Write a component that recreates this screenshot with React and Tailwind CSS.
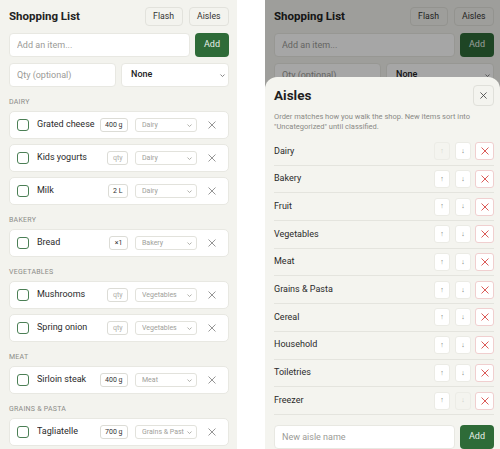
const sections = [
  { name: 'Dairy', items: [
    { name: 'Grated cheese', qty: '400 g', aisle: 'Dairy' },
    { name: 'Kids yogurts', qty: '', aisle: 'Dairy' },
    { name: 'Milk', qty: '2 L', aisle: 'Dairy' },
  ] },
  { name: 'Bakery', items: [{ name: 'Bread', qty: '×1', aisle: 'Bakery' }] },
  { name: 'Vegetables', items: [
    { name: 'Mushrooms', qty: '', aisle: 'Vegetables' },
    { name: 'Spring onion', qty: '', aisle: 'Vegetables' },
  ] },
  { name: 'Meat', items: [{ name: 'Sirloin steak', qty: '400 g', aisle: 'Meat' }] },
  { name: 'Grains & Pasta', items: [{ name: 'Tagliatelle', qty: '700 g', aisle: 'Grains & Pasta' }] },
]

const aisles = ['Dairy', 'Bakery', 'Fruit', 'Vegetables', 'Meat', 'Grains & Pasta', 'Cereal', 'Household', 'Toiletries', 'Freezer']

function Chevron({ className }) {
  return (
    <svg className={className} viewBox="0 0 10 10" fill="none" stroke="currentColor" strokeWidth="1.3">
      <path d="M2.5 4l2.5 2.5L7.5 4" strokeLinecap="round" strokeLinejoin="round" />
    </svg>
  )
}

function Cross({ className, width = 1.2 }) {
  return (
    <svg className={className} viewBox="0 0 10 10" fill="none" stroke="currentColor" strokeWidth={width}>
      <path d="M1 1l8 8M9 1L1 9" strokeLinecap="round" />
    </svg>
  )
}

function ItemCard({ item }) {
  return (
    <div className="h-[28px] bg-white border border-[#e8e8e2] rounded-[5px] flex items-center pl-[7px] pr-[12px]">
      <div className="w-[12px] h-[12px] border-[1.5px] border-[#4b7f55] rounded-[3px] shrink-0" />
      <div className="flex-1 ml-[8px] text-[9px] text-[#2a2a2a] truncate">{item.name}</div>
      <div className={`h-[13.5px] min-w-[19px] px-[4.5px] border border-[#dcdcd6] rounded-[3px] flex items-center justify-center text-[7px] ${item.qty ? 'text-[#333]' : 'text-[#b0b0aa]'}`}>
        {item.qty || 'qty'}
      </div>
      <div className="ml-[7px] w-[62px] h-[14.5px] border border-[#e2e2dc] rounded-[3px] pl-[6px] pr-[3px] flex items-center gap-[2px] text-[7px] text-[#a0a09a]">
        <span className="flex-1 min-w-0 overflow-hidden whitespace-nowrap">{item.aisle}</span>
        <Chevron className="w-[7px] h-[7px] shrink-0 text-[#a8a8a2]" />
      </div>
      <Cross className="ml-[11px] w-[8px] h-[8px] text-[#888] shrink-0" width={1.1} />
    </div>
  )
}

function ShoppingList() {
  return (
    <div className="w-[220px] ml-[9px] pt-[7px]">
      <div className="flex items-center h-[19px]">
        <div className="flex-1 text-[11.5px] font-bold text-[#222]">Shopping List</div>
        <button className="h-[19px] px-[7.5px] border border-[#e2e2dc] rounded-[4px] text-[8.7px] text-[#333]">Flash</button>
        <button className="ml-[6px] h-[19px] px-[7.5px] border border-[#e2e2dc] rounded-[4px] text-[8.7px] text-[#333]">Aisles</button>
      </div>
      <div className="flex gap-[5px] mt-[7px]">
        <input placeholder="Add an item..." className="flex-1 min-w-0 h-[24px] bg-white border border-[#e8e8e2] rounded-[4px] px-[7px] text-[9px] outline-none placeholder:text-[#9a9a96]" />
        <button className="w-[34px] h-[24px] bg-[#2e6b38] rounded-[4px] text-[9px] text-[#e8f0e8]">Add</button>
      </div>
      <div className="flex gap-[5px] mt-[6px]">
        <input placeholder="Qty (optional)" className="w-[107px] h-[24px] bg-white border border-[#e8e8e2] rounded-[4px] px-[7px] text-[9px] outline-none placeholder:text-[#9a9a96]" />
        <div className="flex-1 h-[24px] bg-white border border-[#e8e8e2] rounded-[4px] pl-[9px] pr-[2px] flex items-center justify-between">
          <span className="text-[9px] font-medium text-[#222]">None</span>
          <Chevron className="w-[7px] h-[7px] text-[#777]" />
        </div>
      </div>
      {sections.map(s => (
        <div key={s.name} className="mt-[11px]">
          <div className="h-[8px] leading-[8px] text-[7px] tracking-[0.25px] uppercase text-[#8c8c88] mb-[5px]">{s.name}</div>
          <div className="flex flex-col gap-[5px]">
            {s.items.map(it => <ItemCard key={it.name} item={it} />)}
          </div>
        </div>
      ))}
    </div>
  )
}

function AisleButton({ children, disabled }) {
  return (
    <div className={`w-[16px] h-[18px] rounded-[3px] border flex items-center justify-center text-[7px] ${disabled ? 'border-[#ecece6] text-[#cfcfca]' : 'bg-white border-[#ebebe5] text-[#777]'}`}>
      {children}
    </div>
  )
}

export default function App() {
  return (
    <div className="flex gap-[28px] w-[500px] h-[449px] overflow-hidden bg-white font-['Roboto',sans-serif]">
      <div className="w-[237px] h-full shrink-0 bg-[#f3f3ee] overflow-hidden">
        <ShoppingList />
      </div>

      <div className="relative w-[235px] h-full shrink-0 bg-[#f3f3ee] overflow-hidden">
        <ShoppingList />
        <div className="absolute inset-0 bg-black/35" />

        {/* Aisles sheet */}
        <div className="absolute left-0 right-0 top-[77px] bottom-0 bg-[#f4f4ef] rounded-t-[12px] pl-[9px] pr-[6px] pt-[8px]">
          <div className="flex items-center h-[21px]">
            <div className="flex-1 text-[13.5px] font-bold text-[#1f1f1f]">Aisles</div>
            <button className="w-[21px] h-[21px] border border-[#e0e0da] rounded-[4px] flex items-center justify-center">
              <Cross className="w-[7px] h-[7px] text-[#444]" width={1.2} />
            </button>
          </div>
          <p className="mt-[5.5px] text-[7.5px] leading-[10.5px] text-[#8a8a86]">
            Order matches how you walk the shop. New items sort into "Uncategorized" until classified.
          </p>
          <div className="mt-[5.5px]">
            {aisles.map((a, i) => (
              <div key={a} className="h-[27.7px] border-b border-[#e4e4de] flex items-center">
                <div className="flex-1 text-[9px] text-[#2a2a2a]">{a}</div>
                <AisleButton disabled={i === 0}>↑</AisleButton>
                <div className="ml-[5px]"><AisleButton disabled={i === aisles.length - 1}>↓</AisleButton></div>
                <div className="ml-[4px] w-[19px] h-[18px] rounded-[3px] border border-[#f0cfcf] bg-white flex items-center justify-center">
                  <Cross className="w-[8px] h-[8px] text-[#d9534f]" width={1.2} />
                </div>
              </div>
            ))}
          </div>
          <div className="flex gap-[5px] mt-[10px]">
            <input placeholder="New aisle name" className="flex-1 min-w-0 h-[24px] bg-white border border-[#e8e8e2] rounded-[4px] px-[7px] text-[9px] outline-none placeholder:text-[#9a9a96]" />
            <button className="w-[34px] h-[24px] bg-[#2e6b38] rounded-[4px] text-[9px] text-[#e8f0e8]">Add</button>
          </div>
        </div>
      </div>
    </div>
  )
}
